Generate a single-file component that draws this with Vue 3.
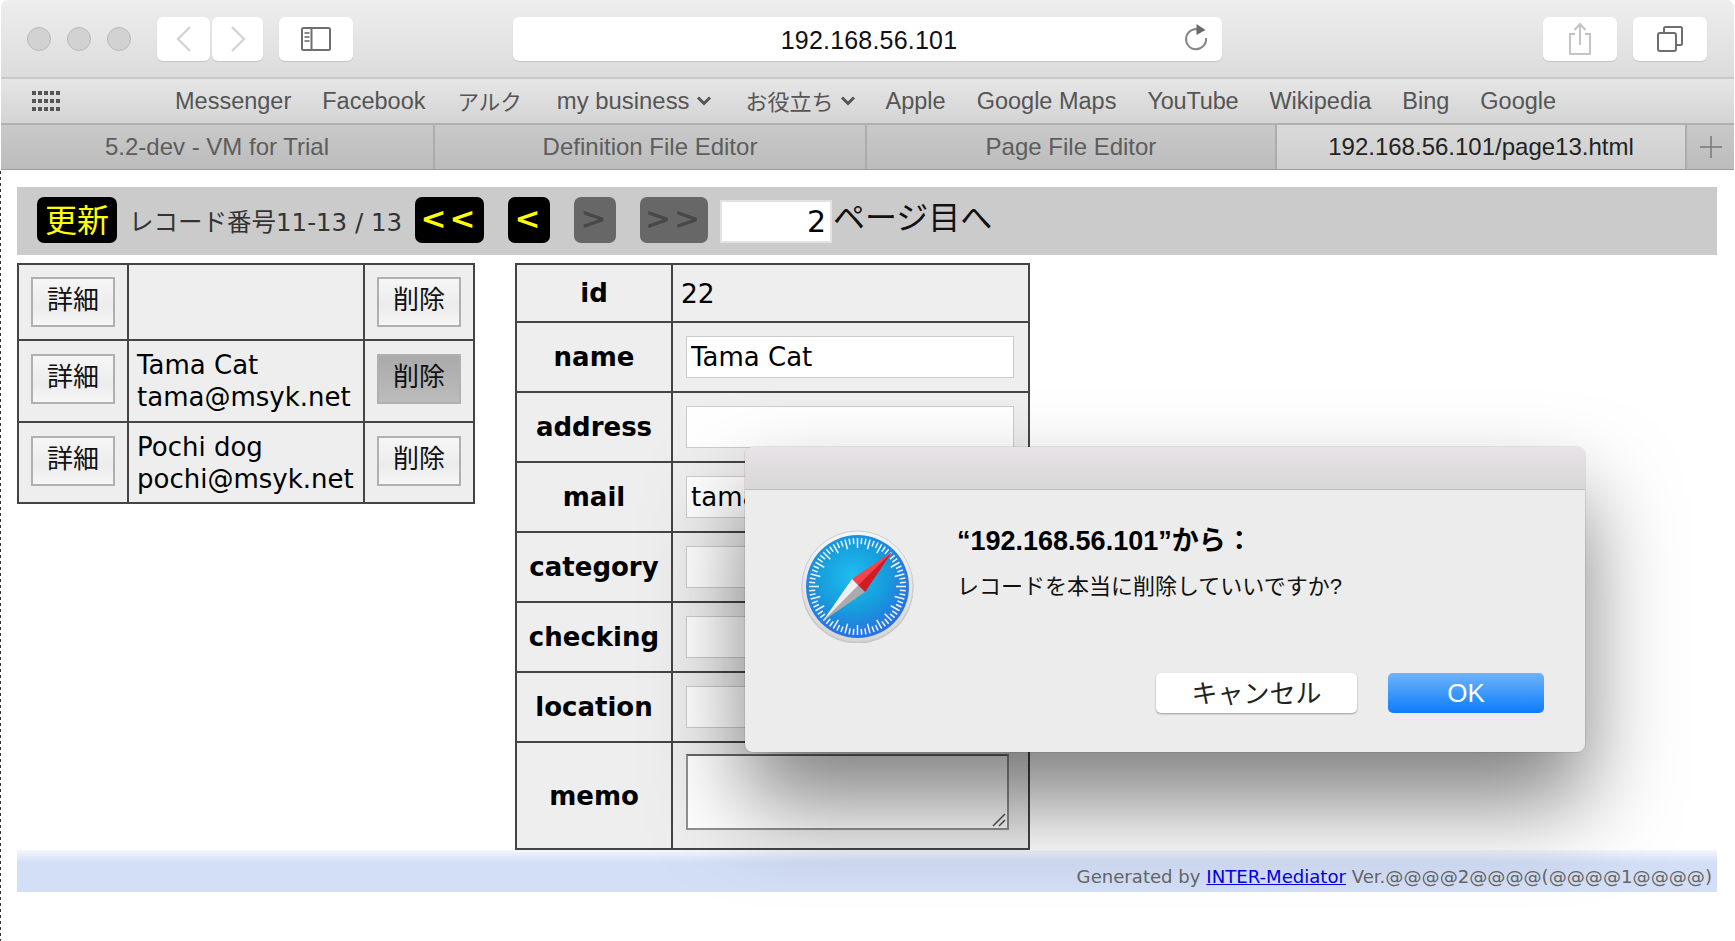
<script setup>
const bookmarksB = [
  { t: 'Apple' },
  { t: 'Google Maps' },
  { t: 'YouTube', c: 'tight' },
  { t: 'Wikipedia' },
  { t: 'Bing' },
  { t: 'Google' }
]
const tabs = [
  { t: '5.2-dev - VM for Trial', w: 434 },
  { t: 'Definition File Editor', w: 432 },
  { t: 'Page File Editor', w: 410 },
  { t: '192.168.56.101/page13.html', w: 410, active: true }
]
const rows = [
  { id: 1, lines: [], h: 76 },
  { id: 2, lines: ['Tama Cat', 'tama@msyk.net'], h: 82, pressed: true },
  { id: 3, lines: ['Pochi dog', 'pochi@msyk.net'], h: 81 }
]
const fields = [
  { k: 'name', v: 'Tama Cat' },
  { k: 'address', v: '' },
  { k: 'mail', v: 'tama@msyk.net' },
  { k: 'category', v: '' },
  { k: 'checking', v: '' },
  { k: 'location', v: '' }
]
const ticks = Array.from({ length: 72 }, (_, i) => i * 5)
</script>

<template>
  <div class="window">
    <header class="toolbar">
      <div class="lights"><i></i><i></i><i></i></div>
      <div class="btn back">
        <svg width="20" height="28" viewBox="0 0 20 28"><path d="M16 2 4 14l12 12" fill="none" stroke="#d4d4d4" stroke-width="2.4"/></svg>
      </div>
      <div class="btn fwd">
        <svg width="20" height="28" viewBox="0 0 20 28"><path d="M4 2l12 12L4 26" fill="none" stroke="#d4d4d4" stroke-width="2.4"/></svg>
      </div>
      <div class="btn side">
        <svg width="30" height="24" viewBox="0 0 30 24"><rect x="1" y="1" width="28" height="22" rx="1.5" fill="none" stroke="#6e6e6e" stroke-width="2"/><path d="M10.5 1v22" stroke="#6e6e6e" stroke-width="2"/><path d="M3.5 6h5M3.5 10h5M3.5 14h5" stroke="#8a8a8a" stroke-width="2"/></svg>
      </div>
      <div class="url">
        <span class="url-text">192.168.56.101</span>
        <svg class="reload" width="26" height="30" viewBox="0 0 26 30"><path d="M16 6.6A10 10 0 1 0 23 15" fill="none" stroke="#858585" stroke-width="2"/><path d="M13.5 1l9 6-9 5z" fill="#6a6a6a"/></svg>
      </div>
      <div class="btn share">
        <svg width="24" height="34" viewBox="0 0 24 34"><path d="M7 12H2v20h20V12h-5M12 23V2M6.5 8 12 2l5.500 6" fill="none" stroke="#c4c4c4" stroke-width="2"/></svg>
      </div>
      <div class="btn dup">
        <svg width="26" height="26" viewBox="0 0 26 26"><rect x="1" y="7" width="18" height="18" rx="2" fill="none" stroke="#6e6e6e" stroke-width="2"/><path d="M7 7V2.500C7 1.600 7.600 1 8.500 1h15c.9 0 1.500.6 1.500 1.500v15c0 .9-.6 1.500-1.500 1.500H19" fill="none" stroke="#6e6e6e" stroke-width="2"/></svg>
      </div>
    </header>

    <nav class="bookmarks">
      <svg class="grid" width="29" height="20" viewBox="0 0 29 20"><g fill="#555"><template v-for="y in [0, 8, 16]" :key="y"><rect v-for="x in [0, 6, 12, 18, 24]" :key="x" :x="x" :y="y" width="4" height="4"/></template></g></svg>
      <div class="links">
        <span>Messenger</span>
        <span>Facebook</span>
        <span class="cjk alc">アルク</span>
        <span class="drop mb">my business<svg width="14" height="10" viewBox="0 0 14 10"><path d="M1 1.500 7 7.500 13 1.500" fill="none" stroke="#555" stroke-width="3"/></svg></span>
        <span class="drop oy"><span class="cjk">お役立ち</span><svg width="14" height="10" viewBox="0 0 14 10"><path d="M1 1.500 7 7.500 13 1.500" fill="none" stroke="#555" stroke-width="3"/></svg></span>
        <span v-for="b in bookmarksB" :key="b.t" :class="b.c">{{ b.t }}</span>
      </div>
    </nav>

    <div class="tabs">
      <div v-for="t in tabs" :key="t.t" class="tab" :class="{ active: t.active }" :style="{ width: t.w + 'px' }">{{ t.t }}</div>
      <div class="tab plus">
        <svg width="22" height="22" viewBox="0 0 22 22"><path d="M11 0v22M0 11h22" stroke="#777" stroke-width="1.500"/></svg>
      </div>
    </div>

    <main class="page">
      <div class="pager">
        <span class="update"><span class="lift">更新</span></span>
        <span class="count">レコード番号11-13 / 13</span>
        <span class="nav first">&lt;&lt;</span>
        <span class="nav prev">&lt;</span>
        <span class="nav next off">&gt;</span>
        <span class="nav last off">&gt;&gt;</span>
        <input class="page-no" value="2" />
        <span class="go">ページ目へ</span>
      </div>

      <div class="content">
        <table class="list">
          <colgroup><col class="c1" /><col class="c2" /><col class="c3" /></colgroup>
          <tbody>
            <tr v-for="r in rows" :key="r.id" :style="{ height: r.h + 'px' }">
              <td class="mid"><button class="cmd">詳細</button></td>
              <td class="who"><div v-for="l in r.lines" :key="l">{{ l }}</div></td>
              <td class="mid"><button class="cmd" :class="{ pressed: r.pressed }">削除</button></td>
            </tr>
          </tbody>
        </table>

        <table class="detail">
          <colgroup><col class="k" /><col class="v" /></colgroup>
          <tbody>
            <tr class="r58"><th>id</th><td class="idv">22</td></tr>
            <tr v-for="f in fields" :key="f.k" class="r70">
              <th>{{ f.k }}</th>
              <td class="fieldcell"><input class="field" :value="f.v" /></td>
            </tr>
            <tr class="r107">
              <th>memo</th>
              <td class="fieldcell">
                <div class="memo-wrap">
                  <textarea class="memo"></textarea>
                  <svg class="grip" width="14" height="14" viewBox="0 0 14 14"><path d="M1 13 13 1M7 13l6-6" stroke="#555" stroke-width="1.500"/></svg>
                </div>
              </td>
            </tr>
          </tbody>
        </table>
      </div>

      <footer class="foot">Generated by <a href="#">INTER-Mediator</a> Ver.@@@@2@@@@(@@@@1@@@@)</footer>
    </main>

    <div class="dialog">
      <div class="dlg-title"></div>
      <div class="dlg-body">
        <svg class="safari" width="113" height="113" viewBox="0 0 113 113">
          <defs>
            <radialGradient id="sky" cx="0.45" cy="0.4" r="0.6">
              <stop offset="0" stop-color="#1fbdf0"/>
              <stop offset="0.55" stop-color="#169ddc"/>
              <stop offset="1" stop-color="#2a6fe2"/>
            </radialGradient>
            <linearGradient id="rim" x1="0" y1="0" x2="0" y2="1">
              <stop offset="0" stop-color="#f6f6f6"/>
              <stop offset="1" stop-color="#d6d6d6"/>
            </linearGradient>
          </defs>
          <circle cx="56.500" cy="57.500" r="56" fill="#b5b5b5" opacity=".7"/>
          <circle cx="56.500" cy="56.500" r="55.500" fill="url(#rim)" stroke="#cdcdcd" stroke-width="1"/>
          <circle cx="56.500" cy="56.500" r="51.500" fill="url(#sky)"/>
          <g stroke="#eef7fc" stroke-width="1.500">
            <line v-for="a in ticks" :key="a" x1="56.500" y1="8" x2="56.500" :y2="a % 15 === 0 ? 18 : 14" :transform="`rotate(${a} 56.500 56.500)`"/>
          </g>
          <path d="M91 22 51 49 64 62z" fill="#f5434b"/>
          <path d="M91 22 57 55.500 64 62z" fill="#cf1c25"/>
          <path d="M22 91 51 49 64 62z" fill="#ababab"/>
          <path d="M22 91 51 49 57 55.500z" fill="#f0f0f0"/>
        </svg>
        <div class="dlg-text">
          <div class="dlg-head">“192.168.56.101”から：</div>
          <div class="dlg-msg">レコードを本当に削除していいですか?</div>
        </div>
      </div>
      <div class="dlg-actions">
        <button class="cancel">キャンセル</button>
        <button class="ok">OK</button>
      </div>
    </div>
  </div>
</template>

<style>
html, body { margin: 0; background: #fff; }
body::before {
  content: "";
  position: fixed; left: 0; top: 171px; bottom: 0; width: 1px;
  background: repeating-linear-gradient(#333 0 3px, #fff 3px 6px);
}
</style>

<style scoped>
.window {
  position: relative;
  width: 1733px;
  height: 941px;
  margin-left: 1px;
  overflow: hidden;
  background: #fff;
  border-radius: 7px 7px 0 0;
  font-family: "Liberation Sans", "Noto Sans CJK JP", sans-serif;
}
.toolbar {
  display: flex;
  align-items: center;
  height: 77px;
  background: linear-gradient(#eeeeee, #dcdcdc);
  border-bottom: 2px solid #c8c8c8;
  box-sizing: content-box;
}
.lights { display: flex; gap: 16px; margin-left: 26px; width: 130px; }
.lights i {
  width: 24px; height: 24px; border-radius: 50%;
  background: #d2d2d2; border: 1px solid #b9b9b9; box-sizing: border-box;
}
.btn {
  display: flex; align-items: center; justify-content: center;
  height: 44px; background: #fff; border-radius: 6px;
  box-shadow: 0 1px 1px rgba(0,0,0,.12);
}
.back { width: 53px; }
.fwd { width: 51px; margin-left: 2px; }
.side { width: 74px; margin-left: 16px; }
.url {
  position: relative;
  display: flex; align-items: center; justify-content: center;
  width: 709px; height: 44px; margin-left: 160px; background: #fff;
  border-radius: 6px; box-shadow: 0 1px 1px rgba(0,0,0,.12);
}
.url-text { font-size: 25px; letter-spacing: .2px; color: #111; margin-left: 3px; padding-top: 4px; }
.reload { position: absolute; right: 13px; top: 6px; }
.share { width: 74px; margin-left: 321px; }
.dup { width: 74px; margin-left: 16px; }

.bookmarks {
  position: relative;
  display: flex; align-items: center;
  height: 44px;
  background: linear-gradient(#e6e6e6, #d4d4d4);
  border-bottom: 2px solid #b0b0b0;
}
.grid { margin-left: 31px; }
.links {
  display: flex; align-items: center; gap: 31px;
  margin-left: 114px; font-size: 23.500px; color: #555;
}
.cjk { font-size: 22px; position: relative; top: -1px; }
.alc { margin-left: 1px; font-size: 21.500px; }
.drop { display: inline-flex; align-items: center; gap: 7px; }
.mb { margin-left: 4px; font-size: 23.900px; }
.oy { margin-left: 4px; }
.tight { letter-spacing: -.2px; }

.tabs { display: flex; height: 44px; border-bottom: 1px solid #9d9d9d; box-sizing: content-box; }
.tab {
  display: flex; align-items: center; justify-content: center;
  box-sizing: border-box;
  background: linear-gradient(#c9c9c9, #bcbcbc);
  border-right: 2px solid #acacac;
  font-size: 24px; color: #5d5d5d;
}
.tab.active { background: linear-gradient(#dadada, #cecece); color: #222; }
.plus { flex: 1; border-right: 0; }

.page { padding: 17px 16px 0 16px; }
.pager {
  display: flex; align-items: center;
  height: 68px; width: 1700px;
  background: #cbcbcb;
  font-family: "DejaVu Sans", "Noto Sans CJK JP", sans-serif;
  box-sizing: border-box;
  padding-left: 20px;
}
.update, .nav {
  display: flex; align-items: center; justify-content: center;
  height: 46px; border-radius: 7px; background: #000; color: #ff0;
  box-sizing: border-box; margin-top: -3px;
}
.update { width: 80px; font-size: 32px; }
.lift { position: relative; top: -2px; }
.count { width: 298px; padding-left: 12px; box-sizing: border-box; font-size: 24.500px; color: #333; position: relative; top: -1px; }
.nav { font-size: 31px; font-weight: bold; letter-spacing: 3px; padding-bottom: 3px; }
.first { width: 69px; }
.prev { width: 42px; margin-left: 24px; }
.next { width: 42px; margin-left: 24px; }
.last { width: 68px; margin-left: 24px; }
.off { background: #676767; color: #484848; }
.page-no {
  width: 112px; height: 43px; margin-left: 12px;
  box-sizing: border-box; border: 2px solid #e3e3e3; background: #fff;
  padding: 0 4px; text-align: right;
  font: 30px "DejaVu Sans", sans-serif; color: #000;
}
.go { font-size: 32px; margin-left: 1px; color: #111; position: relative; top: -6px; }

.content { display: flex; align-items: flex-start; gap: 40px; margin-top: 8px; }
table { border-collapse: collapse; table-layout: fixed; font-family: "DejaVu Sans", "Noto Sans CJK JP", sans-serif; color: #000; }
td, th { border: 2px solid #444; background: #eeeeee; padding: 0; }
.list { width: 456px; }
.c1 { width: 110px; }
.c2 { width: 236px; }
.c3 { width: 110px; }
.mid { text-align: center; }
.cmd {
  width: 84px; height: 50px; padding: 0 0 9px;
  border: 2px solid #b0b0b0; background: linear-gradient(#f6f6f6, #ececec 60%, #f6f6f6);
  font: 26px "Noto Sans CJK JP", sans-serif; color: #111;
  display: block; margin: -4px auto 0;
}
.list tr:first-child .cmd { margin-top: 0; }
.cmd.pressed { background: linear-gradient(#aaa, #bcbcbc); }
.who { padding-left: 8px; font-size: 26px; line-height: 32px; white-space: nowrap; }
.detail { width: 513px; }
.k { width: 156px; }
.v { width: 357px; }
th { font-size: 26px; font-weight: bold; }
.r58 { height: 58px; }
.r70 { height: 70px; }
.r107 { height: 107px; }
.idv { padding-left: 8px; font-size: 26.500px; }
.fieldcell { padding-left: 13px; }
.field {
  display: block; width: 328px; height: 42px; box-sizing: border-box;
  border: 1px solid #ccc; background: #fff; padding: 0 4px;
  font: 26px "DejaVu Sans", sans-serif; color: #000;
}
.memo-wrap { position: relative; width: 323px; height: 76px; margin-bottom: 7px; }
.memo {
  display: block; width: 323px; height: 76px; box-sizing: border-box;
  border: 2px solid; border-color: #666 #909090 #909090 #909090;
  background: #fff; margin: 0; resize: none;
}
.grip { position: absolute; right: 3px; bottom: 3px; }
.foot {
  height: 42px; width: 1700px; box-sizing: border-box;
  background: linear-gradient(#f3f6fd, #d3dff7 30%, #d3dff7);
  padding: 14px 5px 0 0; text-align: right;
  font: 18.100px/26px "DejaVu Sans", sans-serif; color: #666;
  white-space: nowrap; overflow: hidden;
}
.foot a { color: #0000e6; text-decoration: underline; }

.dialog {
  position: absolute; left: 744px; top: 447px;
  width: 840px; height: 305px;
  background: #ececec; border-radius: 8px;
  box-shadow: 0 50px 90px rgba(0,0,0,.5), 0 0 0 1px rgba(0,0,0,.08);
  overflow: visible;
  display: flex; flex-direction: column;
}
.dlg-title {
  height: 42px; flex: none;
  background: linear-gradient(#e7e3e6, #d9d7d8);
  border-bottom: 1px solid #bdbdbd;
  border-radius: 8px 8px 0 0;
}
.dlg-body { display: flex; align-items: flex-start; padding: 40px 0 0 56px; height: 183px; box-sizing: border-box; }
.safari { flex: none; }
.dlg-text { margin-left: 43px; margin-top: -6px; color: #111; font-family: "Liberation Sans", "Noto Sans CJK JP", sans-serif; }
.dlg-head { font-size: 27px; font-weight: bold; line-height: 34px; color: #000; }
.dlg-msg { font-size: 22px; line-height: 34px; margin-top: 12px; }
.dlg-actions { display: flex; justify-content: flex-end; gap: 31px; padding-right: 41px; margin-top: 0; }
.cancel, .ok {
  height: 40px; padding: 0; border: 0; border-radius: 5px;
  font-family: "Liberation Sans", "Noto Sans CJK JP", sans-serif; font-size: 26px;
}
.cancel { width: 201px; background: #fff; color: #222; box-shadow: 0 1px 2px rgba(0,0,0,.35); padding-bottom: 5px; }
.ok { width: 156px; background: linear-gradient(#6fb3f9, #0c7dfb); color: #fff; }
</style>
